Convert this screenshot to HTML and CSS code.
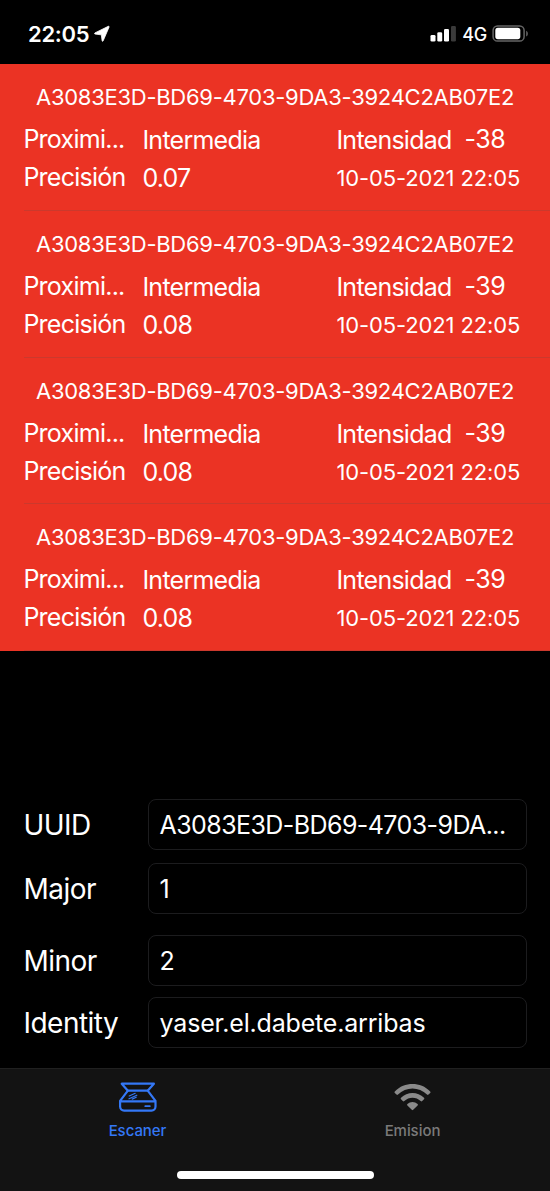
FILE: index.html
```html
<!DOCTYPE html>
<html lang="es">
<head>
<meta charset="utf-8">
<title>Escaner</title>
<link rel="stylesheet" href="styles.css">
</head>
<body>
<div class="phone">
  <header class="status">
    <div class="status-left"><span class="time">22:05</span>
      <svg class="loc" width="17" height="17" viewBox="0 0 17 17"><path d="M14.300 1.300.900 7.900c-.6.400-.4 1.100.2 1.200l6.200.700.8 5.900c.1.700.7.800 1 .2L15.100 2c.2-.6-.2-.9-.8-.7Z" fill="#fff" stroke="#fff" stroke-width=".8"/></svg>
    </div>
    <div class="status-right">
      <svg width="26" height="17" viewBox="0 0 26 17"><g fill="#fff"><rect x="0.500" y="10" width="5" height="6.500" rx="1.3"/><rect x="7.300" y="7.3" width="4.9" height="9.200" rx="1.3"/><rect x="14" y="3.9" width="5" height="12.6" rx="1.3"/></g><rect x="21" y="0.9" width="4.9" height="15.6" rx="1.3" fill="#3a3a3a"/></svg>
      <span class="net">4G</span>
      <svg width="37" height="17" viewBox="0 0 37 17"><rect x="1.100" y=".9" width="31" height="15.2" rx="4.4" fill="none" stroke="#666" stroke-width="1.5"/><rect x="3.300" y="2.8" width="25" height="11.4" rx="2.6" fill="#fff"/><path d="M34.200 5.800c2.200.9 2.200 4.900 0 5.800Z" fill="#666"/></svg>
    </div>
  </header>
  <main class="list">
    <section class="cell">
      <div class="uuid">A3083E3D-BD69-4703-9DA3-3924C2AB07E2</div>
      <div class="grid"><span class="word up">Proximi...</span><span class="word">Intermedia</span><span class="word">Intensidad</span><span class="num up">-38</span></div>
      <div class="grid second"><span class="word up">Precisión</span><span class="num acc">0.07</span><span class="date">10-05-2021 22:05</span></div>
    </section>
    <section class="cell">
      <div class="uuid">A3083E3D-BD69-4703-9DA3-3924C2AB07E2</div>
      <div class="grid"><span class="word up">Proximi...</span><span class="word">Intermedia</span><span class="word">Intensidad</span><span class="num up">-39</span></div>
      <div class="grid second"><span class="word up">Precisión</span><span class="num acc">0.08</span><span class="date">10-05-2021 22:05</span></div>
    </section>
    <section class="cell">
      <div class="uuid">A3083E3D-BD69-4703-9DA3-3924C2AB07E2</div>
      <div class="grid"><span class="word up">Proximi...</span><span class="word">Intermedia</span><span class="word">Intensidad</span><span class="num up">-39</span></div>
      <div class="grid second"><span class="word up">Precisión</span><span class="num acc">0.08</span><span class="date">10-05-2021 22:05</span></div>
    </section>
    <section class="cell">
      <div class="uuid">A3083E3D-BD69-4703-9DA3-3924C2AB07E2</div>
      <div class="grid"><span class="word up">Proximi...</span><span class="word">Intermedia</span><span class="word">Intensidad</span><span class="num up">-39</span></div>
      <div class="grid second"><span class="word up">Precisión</span><span class="num acc">0.08</span><span class="date">10-05-2021 22:05</span></div>
    </section>
  </main>
  <form class="form">
    <div class="field"><span class="label">UUID</span><div class="box"><span class="code">A3083E3D-BD69-4703-9DA...</span></div></div>
    <div class="field major"><span class="label">Major</span><div class="box"><span>1</span></div></div>
    <div class="field minor"><span class="label">Minor</span><div class="box"><span>2</span></div></div>
    <div class="field identity"><span class="label">Identity</span><div class="box"><span class="name">yaser.el.dabete.arribas</span></div></div>
  </form>
  <nav class="tabs">
    <div class="tab active">
      <svg width="40" height="32" viewBox="0 0 40 32" fill="none" stroke="#3478f6" stroke-width="2.200" stroke-linejoin="round" stroke-linecap="round"><path d="M3.700 2.700h32.200l-6.200 7H9.900Z"/><path d="M9.900 9.700 2.100 19.900M29.700 9.700l7.800 10.200M2.500 20.400h34.600M2.100 19.900v5.700a4 4 0 0 0 4 4h27.400a4 4 0 0 0 4-4v-5.700"/><path d="M27.300 25.200h4.500" stroke-width="1.800"/><path d="m11.200 15 6-2.700M11 17.800l7.800-3.600M14.200 18.100l4-1.900" stroke-width="1.200"/></svg>
      <span>Escaner</span>
    </div>
    <div class="tab">
      <svg width="40" height="32" viewBox="0.5 0 40 32" fill="#8a8a8a"><path d="M2.300 10.400C12 .6 28 .6 37.700 10.400c.5.500.5 1 0 1.500l-1.700 1.700c-.5.500-1 .5-1.500 0-8-8-21-8-29 0-.5.500-1 .500-1.500 0l-1.700-1.700c-.5-.5-.5-1 0-1.500Z"/><path d="M8.500 16.800c6.300-6.300 16.700-6.300 23 0 .5.500.5 1 0 1.500l-1.800 1.700c-.5.500-1 .5-1.500 0-4.600-4.500-11.800-4.500-16.400 0-.5.500-1 .5-1.500 0l-1.800-1.700c-.5-.5-.5-1 0-1.500Z"/><path d="M14.900 23c2.900-2.800 7.300-2.800 10.200 0 .5.500.5 1 0 1.500l-4.400 4.300c-.5.500-.9.500-1.400 0l-4.400-4.300c-.5-.5-.5-1 0-1.500Z"/></svg>
      <span>Emision</span>
    </div>
    <div class="home"></div>
  </nav>
</div>
</body>
</html>
```
FILE: styles.css
```css
* { box-sizing: border-box; }
body { margin: 0; background: #000; color: #fff; font-family: Inter, "Liberation Sans", sans-serif; }
.phone { width: 550px; height: 1191px; display: flex; flex-direction: column; overflow: hidden; }
svg { display: block; }
span { white-space: nowrap; }

.status { height: 64px; flex: none; display: flex; justify-content: space-between; padding: 25px 21px 0 28px; }
.status-left, .status-right { display: flex; height: 17px; align-items: center; }
.loc { margin-left: 5px; }
.time { font-size: 22px; font-weight: 600; line-height: 19px; letter-spacing: -0.3px; padding-top: 1px; }
.net { font-size: 18px; font-weight: 500; line-height: 17px; margin: 0 5px 0 6px; padding-top: 1px; letter-spacing: -0.3px; }

.list { background: #eb3324; height: 587px; flex: none; display: grid; grid-template-rows: repeat(4, 1fr); }
.cell { padding-top: 19px; background: linear-gradient(#cb392d, #cb392d) 24px 100% / 100% 1px no-repeat; }
.uuid { padding-left: 36px; font-size: 22px; line-height: 28px; height: 28px; white-space: nowrap; letter-spacing: -0.27px; }
.grid { display: grid; grid-template-columns: 119px 194px 128px 1fr; padding-left: 23.4px; margin-top: 13px; line-height: 32px; height: 32px; font-size: 25px; }
.grid.second { grid-template-columns: 119px 194px 1fr; margin-top: 6px; }
.word { letter-spacing: -0.75px; }
.num { letter-spacing: -0.4px; }
.acc { letter-spacing: -0.8px; }
.up { line-height: 31px; }
.date { font-size: 22px; letter-spacing: -0.13px; }

.form { flex: none; height: 269px; margin-top: 148px; display: flex; flex-direction: column; }
.field { display: flex; padding: 0 23px 0 23.4px; height: 51px; align-items: center; }
.major { margin-top: 13px; }
.minor { margin-top: 21px; }
.identity { margin-top: 11px; }
.label { flex: none; width: 124.6px; font-size: 28px; letter-spacing: -0.5px; }
.box { flex: 1; height: 51px; border: 1px solid #1c1c1e; border-radius: 8px; padding-left: 10.6px; font-size: 25px; line-height: 51px; }
.code { letter-spacing: -0.58px; }
.name { letter-spacing: -0.18px; }

.tabs { flex: none; height: 123px; background: #131313; border-top: 1px solid #202020; display: grid; grid-template: 100px 1fr / 1fr 1fr; }
.tab { padding-top: 12px; display: flex; flex-direction: column; align-items: center; color: #7a7a7a; font-size: 15px; font-weight: 500; }
.tab span { line-height: 18px; margin-top: 9px; letter-spacing: -0.05px; }
.active { color: #3478f6; }
.home { grid-column: 1 / 3; justify-self: center; width: 197px; height: 8px; border-radius: 4px; background: #fff; margin-top: 2px; }
```
